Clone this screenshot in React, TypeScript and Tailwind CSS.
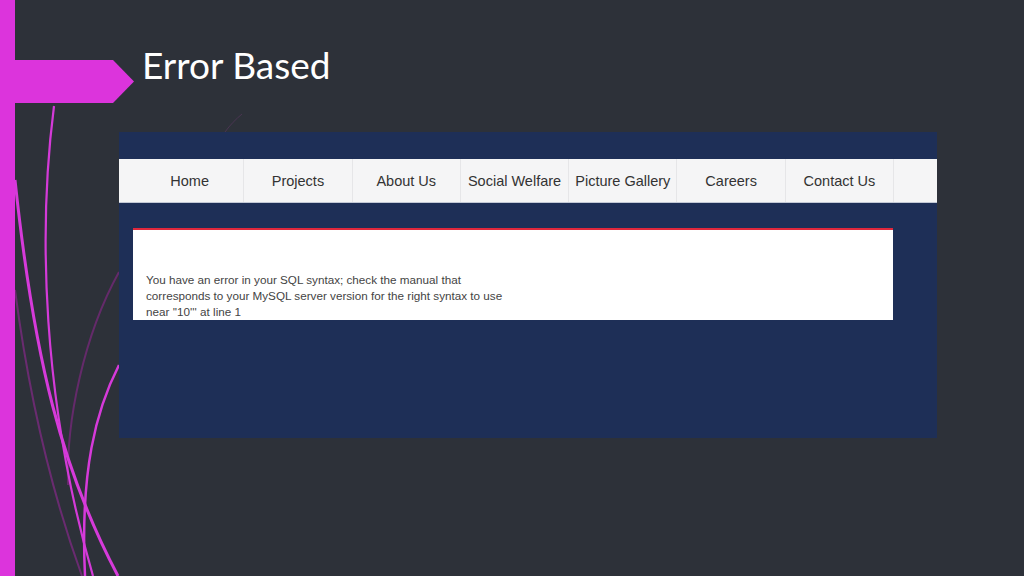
import React from 'react';

const navItems = ['Home', 'Projects', 'About Us', 'Social Welfare', 'Picture Gallery', 'Careers', 'Contact Us'];

const Wisps: React.FC = () => (
  <svg className="absolute inset-0" width="1024" height="576" viewBox="0 0 1024 576" fill="none">
    {/* dim strands */}
    <path d="M15,290 C32,420 58,510 82,576" stroke="#6a2b70" strokeWidth="2" />
    <path d="M119,272 C84,335 66,420 68,485" stroke="#642a6a" strokeWidth="2" />
    <path d="M225,132 C230,125 236,119 242,114" stroke="#4a3552" strokeWidth="1" />
    {/* bright strands */}
    <path d="M54,106 C38,230 42,400 93,576" stroke="#d43ad8" strokeWidth="2.2" />
    <path d="M15,180 C34,360 62,470 118,576" stroke="#d63ada" strokeWidth="3" />
    <path d="M119,365 C96,410 80,470 85,576" stroke="#d63ada" strokeWidth="2.5" />
  </svg>
);

export default function App() {
  return (
    <div className="relative flex w-[1024px] h-[576px] overflow-hidden bg-[#2d3139]">
      <Wisps />
      {/* left accent bar */}
      <div className="relative w-[15px] h-full bg-[#dc34dc]" />
      {/* title arrow */}
      <svg className="absolute left-0 top-[60px]" width="135" height="43" viewBox="0 0 135 43">
        <polygon points="0,0 113,0 134,21.5 113,43 0,43" fill="#dc34dc" />
      </svg>

      <div className="relative flex flex-col pl-[104px] pt-[41px]">
        <h1 className="pl-[23px] text-[37px] leading-[48px] text-white font-normal" style={{ fontFamily: 'Lato, "Open Sans", sans-serif' }}>
          Error Based
        </h1>

        <div className="mt-[43px] w-[818px] h-[306px] bg-[#1e2f57] pt-[27px]" style={{ fontFamily: '"Liberation Sans", Arial, sans-serif' }}>
          <div className="h-[44px] bg-[#f5f5f6] border-b border-[#c3c9d6] flex pl-[17px]">
            {navItems.map((item) => (
              <div key={item} className="w-[108.3px] h-full flex items-center justify-center border-r border-[#e6e6e8] text-[14.5px] text-[#333] pt-[2px]">
                {item}
              </div>
            ))}
          </div>

          <div className="mt-[25px] ml-[14px] w-[760px] h-[92px] overflow-hidden bg-white border-t-2 border-[#e0283c] pt-[42px] pl-[13px] text-[11.7px] leading-[16px] text-[#444]">
            You have an error in your SQL syntax; check the manual that
            <br />
            corresponds to your MySQL server version for the right syntax to use
            <br />
            near ''10''' at line 1
          </div>
        </div>
      </div>
    </div>
  );
}
